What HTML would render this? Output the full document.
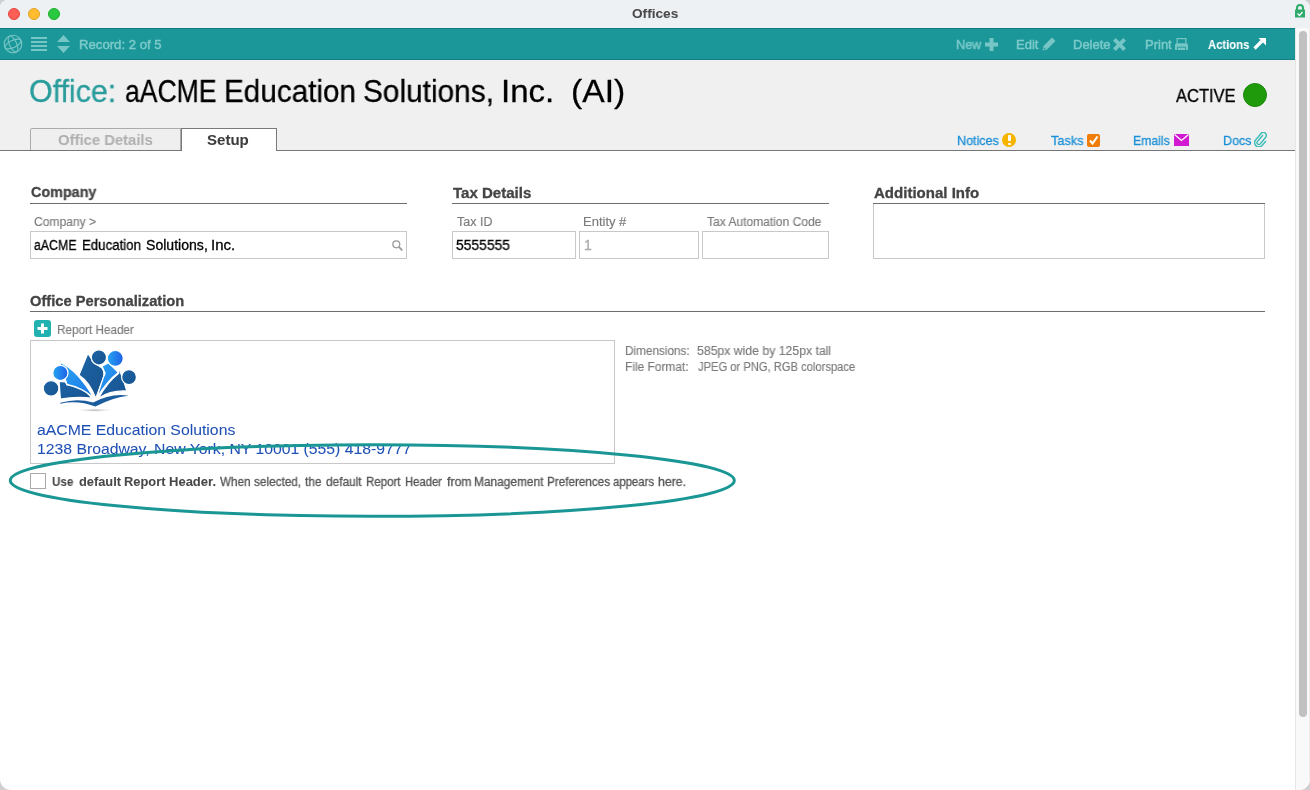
<!DOCTYPE html>
<html><head><meta charset="utf-8">
<style>
*{margin:0;padding:0;box-sizing:border-box}
html,body{width:1310px;height:790px;overflow:hidden;background:#cfcfcf;font-family:"Liberation Sans",sans-serif}
#win{position:relative;width:1310px;height:790px;overflow:hidden;background:#fff;border-radius:8px 8px 11px 11px}
.a{position:absolute;white-space:nowrap;line-height:1;transform-origin:0 0}
span.a{will-change:transform;-webkit-text-stroke:0.3px currentColor}
span.tb{-webkit-text-stroke:0.45px currentColor}
span.lbl{-webkit-text-stroke:0.15px currentColor}
span[style*="bold"]{-webkit-text-stroke:0.05px currentColor}
#t_logo1,#t_logo2{-webkit-text-stroke:0.05px currentColor}
#titlebar{position:absolute;left:0;top:0;width:1310px;height:28px;background:#eef1f4}
#toolbar{position:absolute;left:0;top:28px;width:1295px;height:32px;background:#1c9799;border-top:1px solid #127b7d;border-bottom:1px solid #167f81}
#header{position:absolute;left:0;top:60px;width:1295px;height:91px;background:#f0f0f0}
#hline{position:absolute;left:0;top:150px;width:1295px;height:1px;background:#767676}
.tab{position:absolute;top:128px;height:23px;border:1px solid #8a8a8a;border-bottom:none}
.sech{font-weight:bold;color:#444;font-size:14px}
.uline{position:absolute;height:1px;background:#6e6e6e}
.lbl{color:#7a7a7a;font-size:12px}
.inp{position:absolute;border:1px solid #c8c8c8;background:#fff}
.link{color:#1b8fd6;font-size:13px}
.tb{color:#7ccaca;font-size:13px}
#scroll{position:absolute;left:1295px;top:28px;width:15px;height:762px;background:#f9f9f9;border-left:1px solid #e6e6e6;border-right:1px solid #ececec}
#thumb{position:absolute;left:1299px;top:31px;width:8px;height:686px;background:#c1c1c1;border-radius:4px}
</style></head><body><div id="win">
<div id="titlebar"></div>
<div class="a" style="left:8px;top:8px;width:12px;height:12px;border-radius:50%;background:#fe5f57;border:1px solid #e2463f"></div>
<div class="a" style="left:27.8px;top:8px;width:12px;height:12px;border-radius:50%;background:#febc2e;border:1px solid #e1a325"></div>
<div class="a" style="left:47.6px;top:8px;width:12px;height:12px;border-radius:50%;background:#28c840;border:1px solid #1dad2b"></div>
<span id="t_offices" class="a" style="left:631.6px;top:6.53px;font-size:13.5px;transform:scaleX(1.0111);font-weight:bold;color:#4a4a4a">Offices</span>
<!-- lock -->
<svg class="a" style="left:1294px;top:3px" width="12" height="15" viewBox="0 0 12 15"><path d="M3 7V5a3 3 0 0 1 6 0v2" fill="none" stroke="#2eaa6a" stroke-width="2"/><rect x="1" y="6.5" width="10" height="8" fill="#2eaa6a"/><path d="M3.5 10.5l2 2 3-3.5" fill="none" stroke="#fff" stroke-width="1.2"/></svg>

<div id="toolbar"></div>
<!-- globe -->
<svg class="a" style="left:3px;top:34px" width="20" height="20" viewBox="0 0 20 20" fill="none" stroke="#76c6c6" stroke-width="1.1"><circle cx="10" cy="10" r="8.8"/><ellipse cx="10" cy="10" rx="8.6" ry="3.6" transform="rotate(-25 10 10)"/><ellipse cx="10" cy="10" rx="3.6" ry="8.6" transform="rotate(-25 10 10)"/></svg>
<!-- hamburger -->
<svg class="a" style="left:31px;top:37px" width="16" height="14" viewBox="0 0 16 14" fill="#76c6c6"><rect x="0" y="0" width="16" height="2"/><rect x="0" y="4" width="16" height="2"/><rect x="0" y="8" width="16" height="2"/><rect x="0" y="12" width="16" height="2"/></svg>
<!-- up/down arrows -->
<svg class="a" style="left:56px;top:35px" width="15" height="18" viewBox="0 0 15 18" fill="#76c6c6"><path d="M7.5 0L14 7H1z"/><path d="M7.5 18L14 11H1z"/></svg>
<span id="t_record" class="a tb" style="left:79.29px;top:37.95px;font-size:13px;transform:scaleX(1.0112);">Record: 2 of 5</span>

<span id="t_new" class="a tb" style="left:956.03px;top:38.15px;font-size:13px;transform:scaleX(0.972);">New</span>
<svg class="a" style="left:985px;top:38px" width="13" height="13" viewBox="0 0 13 13" fill="#76c6c6"><path d="M4.5 0h4v4.5H13v4H8.5V13h-4V8.5H0v-4h4.5z"/></svg>
<span id="t_edit" class="a tb" style="left:1016.32px;top:38.15px;font-size:13px;transform:scaleX(0.981);">Edit</span>
<svg class="a" style="left:1042px;top:37px" width="14" height="14" viewBox="0 0 14 14" fill="#76c6c6"><path d="M10 0.5l3.5 3.5-8.5 8.5L0.5 13.5 1.5 9z"/><path d="M2.2 10.2l1.6 1.6-2.3 0.7z" fill="#1c9799"/></svg>
<span id="t_delete" class="a tb" style="left:1072.61px;top:38.15px;font-size:13px;transform:scaleX(0.9917);">Delete</span>
<svg class="a" style="left:1113px;top:38px" width="13" height="13" viewBox="0 0 13 13" fill="none" stroke="#76c6c6" stroke-width="3.8"><path d="M1.4 1.4l10.2 10.2M11.6 1.4l-10.2 10.2"/></svg>
<span id="t_print" class="a tb" style="left:1144.51px;top:38.15px;font-size:13px;transform:scaleX(0.9885);">Print</span>
<svg class="a" style="left:1175px;top:38px" width="14" height="12" viewBox="0 0 14 12" fill="#76c6c6"><rect x="2.1" y="0.6" width="8.8" height="5.6" fill="none" stroke="#76c6c6" stroke-width="1.2"/><path d="M0 7Q0 5.5 1.5 5.5H11.5Q13 5.5 13 7V12H10.8V8.8H2.2V12H0Z"/><rect x="3" y="9.6" width="7" height="2.4"/></svg>
<span id="t_actions" class="a" style="left:1207.9px;top:38.15px;font-size:13px;transform:scaleX(0.866);font-weight:bold;color:#fff">Actions</span>
<svg class="a" style="left:1253px;top:38px" width="13" height="12" viewBox="0 0 13 12" fill="#fff"><path d="M5.5 0H13V7.5z"/><path d="M1.5 10.5L9.5 2.5" stroke="#fff" stroke-width="3.2" fill="none"/></svg>

<div id="header"></div>
<span id="t_office" class="a" style="left:28.55px;top:74.8px;font-size:32px;transform:scaleX(0.9489);color:#2a9c9c">Office:</span>
<span id="t_n1" class="a" style="left:124.77px;top:74.8px;font-size:32px;transform:scaleX(0.8296);color:#000">aACME</span><span id="t_n2" class="a" style="left:224.32px;top:74.8px;font-size:32px;transform:scaleX(0.927);color:#000">Education</span><span id="t_n3" class="a" style="left:363.34px;top:74.8px;font-size:32px;transform:scaleX(0.9316);color:#000">Solutions,</span><span id="t_n4" class="a" style="left:501.21px;top:74.8px;font-size:32px;transform:scaleX(1.0304);color:#000">Inc.</span><span id="t_n5" class="a" style="left:571.2px;top:74.8px;font-size:32px;transform:scaleX(1.0521);color:#000">(AI)</span>
<span id="t_active" class="a" style="left:1176.0px;top:85.85px;font-size:19px;transform:scaleX(0.8676);color:#000">ACTIVE</span>
<div class="a" style="left:1243px;top:83px;width:24px;height:24px;border-radius:50%;background:#1f9a0b;border:1px solid #188a08"></div>

<div class="tab" style="left:30px;width:151px;background:#efefef;border-color:#ababab;border-top-left-radius:2px"></div>
<div id="hline"></div>
<div class="tab" style="left:181px;width:96px;background:#fff;border-color:#7a7a7a;height:23px"></div>
<span id="t_od" class="a" style="left:57.81px;top:132.45px;font-size:15px;transform:scaleX(0.9894);font-weight:bold;color:#b0b0b0">Office Details</span>
<span id="t_setup" class="a" style="left:206.9px;top:132.45px;font-size:15px;transform:scaleX(1.0025);font-weight:bold;color:#3c3c3c">Setup</span>

<span id="t_notices" class="a link" style="left:956.63px;top:133.75px;font-size:13px;transform:scaleX(0.9667);">Notices</span>
<div class="a" style="left:1002px;top:133px;width:14px;height:14px;border-radius:50%;background:#f6b400"></div>
<div class="a" style="left:1007.5px;top:135px;width:3px;height:6px;background:#fff;border-radius:1px"></div>
<div class="a" style="left:1007.5px;top:142.5px;width:3px;height:2.5px;background:#fff;border-radius:1px"></div>
<span id="t_tasks" class="a link" style="left:1051.0px;top:133.75px;font-size:13px;transform:scaleX(0.9788);">Tasks</span>
<svg class="a" style="left:1087px;top:134px" width="13" height="13" viewBox="0 0 13 13"><rect width="13" height="13" rx="2" fill="#f07d0a"/><path d="M3 6.5l2.5 3L10.5 2.5" fill="none" stroke="#fff" stroke-width="2"/></svg>
<span id="t_emails" class="a link" style="left:1133.46px;top:133.75px;font-size:13px;transform:scaleX(0.9421);">Emails</span>
<svg class="a" style="left:1174px;top:134px" width="15" height="12" viewBox="0 0 15 12"><rect width="15" height="12" fill="#d21ad2"/><path d="M0.5 0.5L7.5 6.5 14.5 0.5" fill="none" stroke="#fff" stroke-width="1.3"/></svg>
<span id="t_docs" class="a link" style="left:1222.54px;top:133.75px;font-size:13px;transform:scaleX(0.9643);">Docs</span>
<svg class="a" style="left:1254px;top:132px" width="13" height="15" viewBox="0 0 13 15" fill="none" stroke="#3bbcb8" stroke-width="1.4"><path d="M9 3L3.5 9.5a1.8 1.8 0 0 0 2.6 2.5L11.5 5.5a3 3 0 0 0-4.3-4.2L1.8 7.8a4.2 4.2 0 0 0 6 5.9L12 9"/></svg>

<!-- Company -->
<span id="t_company" class="a sech" style="left:30.71px;top:185.48px;font-size:14.5px;transform:scaleX(0.9892);">Company</span>
<div class="uline" style="left:30px;top:203px;width:377px"></div>
<span id="t_complbl" class="a lbl" style="left:33.93px;top:215.57px;font-size:12.5px;transform:scaleX(0.9651);">Company &gt;</span>
<div class="inp" style="left:30px;top:231px;width:377px;height:28px"></div>
<span id="t_cv0" class="a" style="left:34.22px;top:237.5px;font-size:14px;transform:scaleX(0.8809);color:#000">aACME</span><span id="t_cv1" class="a" style="left:81.95px;top:237.5px;font-size:14px;transform:scaleX(0.9459);color:#000">Education</span><span id="t_cv2" class="a" style="left:145.99px;top:237.5px;font-size:14px;transform:scaleX(1.0051);color:#000">Solutions,</span><span id="t_cv3" class="a" style="left:210.93px;top:237.5px;font-size:14px;transform:scaleX(1.0667);color:#000">Inc.</span>
<svg class="a" style="left:392px;top:240px" width="11" height="11" viewBox="0 0 11 11" fill="none" stroke="#999" stroke-width="1.2"><circle cx="4.3" cy="4.3" r="3.5"/><path d="M6.8 6.8L10.3 10.3" stroke-width="1.8"/></svg>

<!-- Tax -->
<span id="t_taxd" class="a sech" style="left:453.2px;top:185.68px;font-size:14.5px;transform:scaleX(1.0373);">Tax Details</span>
<div class="uline" style="left:452px;top:203px;width:377px"></div>
<span id="t_taxid" class="a lbl" style="left:457.1px;top:215.57px;font-size:12.5px;transform:scaleX(0.9971);">Tax ID</span>
<span id="t_entity" class="a lbl" style="left:583.36px;top:215.57px;font-size:12.5px;transform:scaleX(1.04);">Entity #</span>
<span id="t_tac" class="a lbl" style="left:707.3px;top:215.57px;font-size:12.5px;transform:scaleX(0.9627);">Tax Automation Code</span>
<div class="inp" style="left:452px;top:231px;width:124px;height:28px"></div>
<div class="inp" style="left:579px;top:231px;width:120px;height:28px"></div>
<div class="inp" style="left:702px;top:231px;width:127px;height:28px"></div>
<span id="t_taxval" class="a" style="left:456.31px;top:237.7px;font-size:14px;transform:scaleX(0.9887);color:#000">5555555</span>
<span id="t_entval" class="a" style="left:583.78px;top:237.7px;font-size:14px;transform:scaleX(1);color:#aaa">1</span>

<!-- Additional -->
<span id="t_addl" class="a sech" style="left:874.2px;top:185.68px;font-size:14.5px;transform:scaleX(1.0366);">Additional Info</span>
<div class="inp" style="left:873px;top:203px;width:392px;height:56px"></div>
<div class="uline" style="left:873px;top:203px;width:392px"></div>

<!-- Office personalization -->
<span id="t_op" class="a sech" style="left:30.19px;top:293.68px;font-size:14.5px;transform:scaleX(1.0126);">Office Personalization</span>
<div class="uline" style="left:30px;top:311px;width:1235px"></div>
<svg class="a" style="left:34px;top:320px" width="17" height="17" viewBox="0 0 17 17"><rect width="17" height="17" rx="3" fill="#22b1b1"/><path d="M7 3.5h3v3.5h3.5v3H10v3.5H7V10H3.5V7H7z" fill="#fff"/></svg>
<span id="t_rh" class="a lbl" style="left:57.46px;top:323.68px;font-size:12.5px;transform:scaleX(0.9383);">Report Header</span>
<div class="inp" style="left:30px;top:340px;width:585px;height:124px"></div>

<svg class="a" style="left:40px;top:345px" width="100" height="70" viewBox="0 0 1129 790">
<defs>
<linearGradient id="gd" x1="0" y1="0" x2="1" y2="1"><stop offset="0" stop-color="#1d64a6"/><stop offset="1" stop-color="#17538f"/></linearGradient>
<linearGradient id="gl" x1="0" y1="0" x2="1" y2="0"><stop offset="0" stop-color="#25a6f0"/><stop offset="1" stop-color="#1f5fe8"/></linearGradient>
<linearGradient id="gl2" x1="0" y1="0" x2="1" y2="1"><stop offset="0" stop-color="#2aa4f2"/><stop offset="1" stop-color="#1d76e6"/></linearGradient>
<radialGradient id="gs"><stop offset="0" stop-color="#aaa"/><stop offset="1" stop-color="#fff" stop-opacity="0"/></radialGradient>
</defs>
<ellipse cx="620" cy="735" rx="230" ry="22" fill="url(#gs)"/>
<g stroke="#fff" stroke-width="14" stroke-linejoin="round">
<path d="M215,410 L285,415 L305,450 Q420,470 520,530 L590,600 Q400,580 230,610 Z" fill="url(#gd)"/>
<path d="M225,195 Q430,290 605,595 Q470,480 305,445 L290,400 L240,260 Z" fill="url(#gl2)"/>
<path d="M880,270 L900,290 Q950,400 980,520 Q800,510 660,600 Q760,420 890,320 Z" fill="url(#gd)"/>
<path d="M540,95 Q580,150 610,200 L700,260 Q740,310 705,400 L630,600 Q560,420 440,340 Z" fill="url(#gd)"/>
<path d="M700,240 L775,200 L885,310 Q760,400 640,600 Q700,400 735,320 Z" fill="url(#gl2)"/>
<path d="M230,652 Q420,595 600,650 Q800,540 1000,572 Q820,590 625,695 Q430,620 230,662 Z" fill="#1b5c9e" stroke-width="0"/>
<circle cx="125" cy="490" r="88" fill="url(#gd)"/>
<circle cx="230" cy="315" r="86" fill="url(#gl)"/>
<circle cx="665" cy="140" r="86" fill="url(#gd)"/>
<circle cx="850" cy="152" r="90" fill="url(#gl)"/>
<circle cx="1005" cy="362" r="84" fill="url(#gd)"/>
</g>
</svg>
<span id="t_dim" class="a lbl" style="left:624.56px;top:345.18px;font-size:12.5px;transform:scaleX(0.9403);">Dimensions:</span>
<span id="t_dimv" class="a lbl" style="left:697.02px;top:345.18px;font-size:12.5px;transform:scaleX(0.98);">585px wide by 125px tall</span>
<span id="t_ff" class="a lbl" style="left:624.55px;top:361.38px;font-size:12.5px;transform:scaleX(0.9538);">File Format:</span>
<span id="t_ffv" class="a lbl" style="left:698.0px;top:361.38px;font-size:12.5px;transform:scaleX(0.8943);">JPEG or PNG, RGB colorspace</span>

<span id="t_logo1" class="a" style="left:37.35px;top:422.45px;font-size:15px;transform:scaleX(1.0524);color:#1f50b5">aACME Education Solutions</span>
<span id="t_logo2" class="a" style="left:37.35px;top:440.85px;font-size:15px;transform:scaleX(1.0504);color:#1f50b5">1238 Broadway, New York, NY 10001 (555) 418-9777</span>

<div class="a" style="left:30px;top:473px;width:16px;height:16px;border:1px solid #a9a9a9;background:#fff"></div>
<span id="t_ud0" class="a" style="left:52.47px;top:475.57px;font-size:12.5px;transform:scaleX(0.9318);color:#484848;font-weight:bold">Use</span><span id="t_ud1" class="a" style="left:78.6px;top:475.57px;font-size:12.5px;transform:scaleX(1.0244);color:#484848;font-weight:bold">default</span><span id="t_ud2" class="a" style="left:124.37px;top:475.57px;font-size:12.5px;transform:scaleX(1.0282);color:#484848;font-weight:bold">Report</span><span id="t_ud3" class="a" style="left:169.16px;top:475.57px;font-size:12.5px;transform:scaleX(1.0409);color:#484848;font-weight:bold">Header.</span>
<span id="t_wh0" class="a" style="left:220.4px;top:475.57px;font-size:12.5px;transform:scaleX(0.9375);color:#555">When</span><span id="t_wh1" class="a" style="left:254.2px;top:475.57px;font-size:12.5px;transform:scaleX(0.9429);color:#555">selected,</span><span id="t_wh2" class="a" style="left:305.2px;top:475.57px;font-size:12.5px;transform:scaleX(0.9471);color:#555">the</span><span id="t_wh3" class="a" style="left:326.1px;top:475.57px;font-size:12.5px;transform:scaleX(0.9474);color:#555">default</span><span id="t_wh4" class="a" style="left:365.68px;top:475.57px;font-size:12.5px;transform:scaleX(0.9189);color:#555">Report</span><span id="t_wh5" class="a" style="left:404.5px;top:475.57px;font-size:12.5px;transform:scaleX(0.9025);color:#555">Header</span><span id="t_wh6" class="a" style="left:446.8px;top:475.57px;font-size:12.5px;transform:scaleX(0.9792);color:#555">from</span><span id="t_wh7" class="a" style="left:474.25px;top:475.57px;font-size:12.5px;transform:scaleX(0.9514);color:#555">Management</span><span id="t_wh8" class="a" style="left:546.77px;top:475.57px;font-size:12.5px;transform:scaleX(0.9348);color:#555">Preferences</span><span id="t_wh9" class="a" style="left:613.4px;top:475.57px;font-size:12.5px;transform:scaleX(0.9089);color:#555">appears</span><span id="t_wh10" class="a" style="left:658.12px;top:475.57px;font-size:12.5px;transform:scaleX(0.9815);color:#555">here.</span>

<svg class="a" style="left:0;top:430px" width="760" height="100" viewBox="0 430 760 100"><ellipse cx="372.3" cy="480.5" rx="362" ry="35.8" fill="none" stroke="#1a9795" stroke-width="3"/></svg>

<div id="scroll"></div>
<div id="thumb"></div>
</div></body></html>
